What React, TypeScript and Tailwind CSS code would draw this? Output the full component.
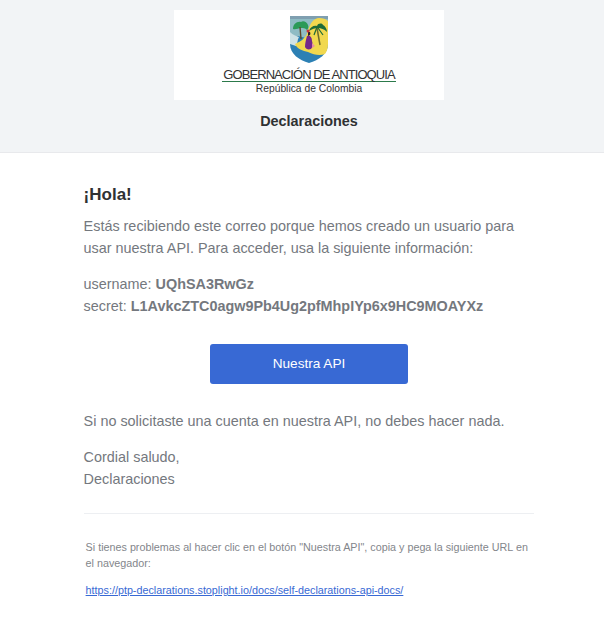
export default function App() {
  return (
    <div className="min-h-[627px] bg-white font-['Liberation_Sans',Arial,sans-serif] text-[#74787e]">
      <header className="flex h-[153px] flex-col items-center border-b border-[#e8e9ec] bg-[#f2f4f6] pl-[14px] pt-[10px]">
        <div className="flex h-[90px] w-[270px] flex-col items-center bg-white pt-[6px]">
          <svg width="38" height="47" viewBox="0 0 38 47" className="blur-[0.5px]">
            <path d="M0 0H38V28C38 38 29 44 19 47C9 44 0 38 0 28Z" fill="#2c80b4" />
            <path d="M0 0H38V14L16 22L8 20L0 24Z" fill="#8fbcc4" />
            <path d="M0 0H38V3H0Z" fill="#7f9fb0" />
            <path d="M0 16C3 19 6 20 9 21C7 24 8 27 6 30L0 28Z" fill="#cfe3e6" />
            <path d="M18 15C20 7 24 2 29 2C33 2 36 3 38 5V28C38 32 37 35 35 38C30 40 24 39 18 36C13 35 7 33 5 28C8 26 12 25 14 22C16 20 17 18 18 15Z" fill="#f1d84e" />
            <path d="M3 13C3 8 7 5 11 6C13 4 17 6 18 9C19 11 18 13 17 14C15 12 13 12 11 12C8 12 6 14 3 13Z" fill="#2a9a58" />
            <path d="M10 11L11 23" stroke="#5d4a2c" strokeWidth="1.4" />
            <path d="M27 12L30 29" stroke="#6f6c2c" strokeWidth="1.5" />
            <path d="M19 15C20 11 24 9 27 10C28 7 32 7 33 9C35 10 37 13 37 16C34 13 31 12 28 12C25 12 22 13 19 15Z" fill="#1d6b38" />
            <path d="M27 11L24 19M28 12L33 19" stroke="#1d6b38" strokeWidth="1.2" />
            <path d="M17 20C20 19 22 21 22 25C23 28 23 31 21 33C18 34 16 33 15 31C15 27 16 24 17 20Z" fill="#74288a" />
            <path d="M18 16C20 15 21 17 20 19L18 20Z" fill="#2b1d2c" />
            <circle cx="18" cy="15" r="1.5" fill="#c8323c" />
            <path d="M22 27L25 30L22 32Z" fill="#e88fa0" />
          </svg>
          <div className="mt-[5px] border-b border-[#2c7a4b] px-[1px] text-[13px] leading-[13px] tracking-[-0.93px] text-[#333]">GOBERNACIÓN DE ANTIOQUIA</div>
          <div className="mt-[1px] text-[10.3px] leading-[12px] text-[#333]">República de Colombia</div>
        </div>
        <div className="mt-[12px] text-[14.4px] font-bold leading-[18px] text-[#2f3133]">Declaraciones</div>
      </header>
      <main className="px-[83.6px] pt-[32px]">
        <h1 className="text-[17px] font-bold leading-[20px] text-[#2f3133]">¡Hola!</h1>
        <p className="mt-[10px] w-[440px] text-[14.4px] leading-[22px]">Estás recibiendo este correo porque hemos creado un usuario para usar nuestra API. Para acceder, usa la siguiente información:</p>
        <p className="mt-[14px] text-[14.4px] leading-[22px]">
          username: <b>UQhSA3RwGz</b><br />
          secret: <b>L1AvkcZTC0agw9Pb4Ug2pfMhpIYp6x9HC9MOAYXz</b>
        </p>
        <div className="mt-[27px] flex justify-center pl-[14px]">
          <a className="flex h-[40px] w-[198px] items-center justify-center rounded-[3px] bg-[#3869d4] text-[13.6px] text-white">Nuestra API</a>
        </div>
        <p className="mt-[26px] text-[14.4px] leading-[22px]">Si no solicitaste una cuenta en nuestra API, no debes hacer nada.</p>
        <p className="mt-[14px] text-[14.4px] leading-[22px]">Cordial saludo,<br />Declaraciones</p>
        <div className="mt-[23px] w-[450.6px] border-t border-[#edeff2] pl-[2px] pt-[25px]">
          <p className="text-[10.77px] leading-[16px] text-[#83868b]">Si tienes problemas al hacer clic en el botón "Nuestra API", copia y pega la siguiente URL en el navegador:</p>
          <a className="mt-[11px] block text-[10.77px] leading-[16px] text-[#3869d4] underline">https://ptp-declarations.stoplight.io/docs/self-declarations-api-docs/</a>
        </div>
      </main>
    </div>
  );
}
